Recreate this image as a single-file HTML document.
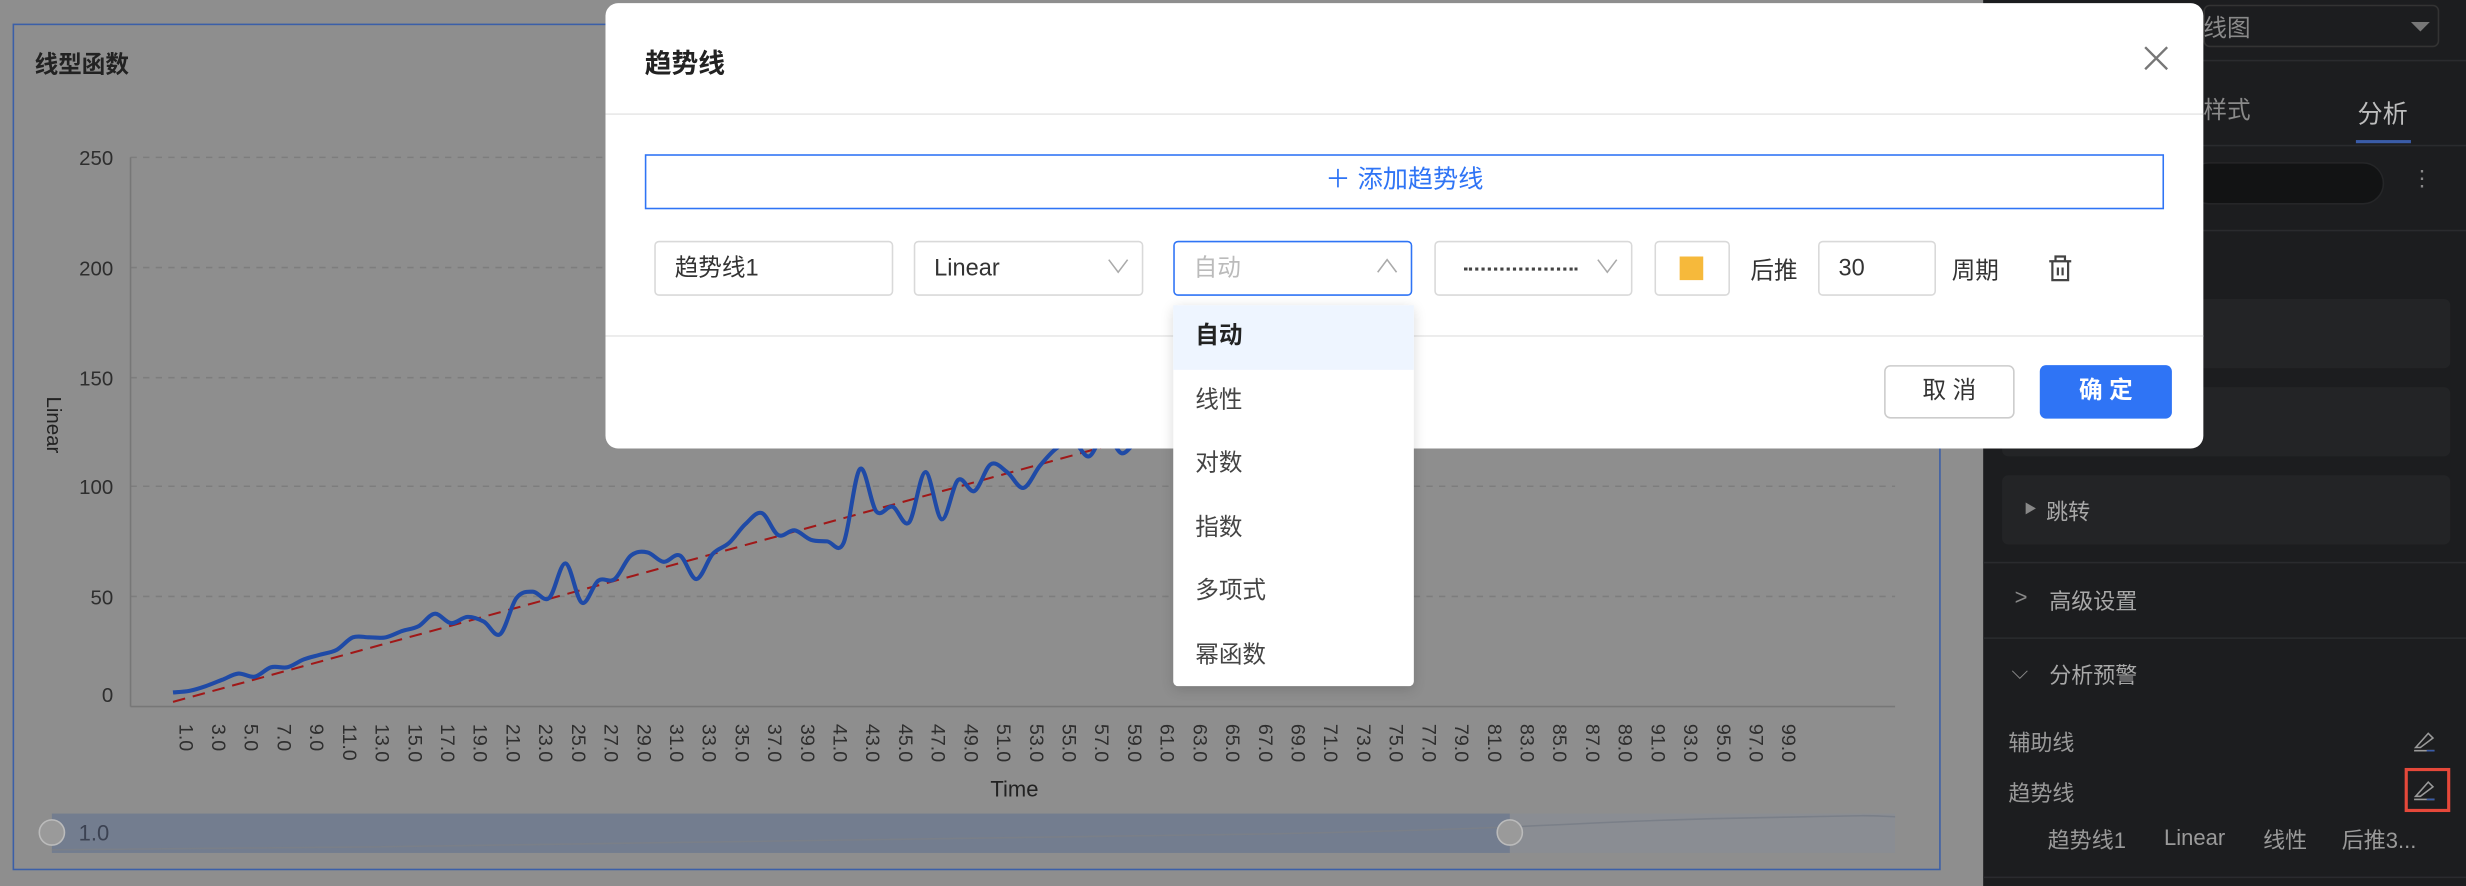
<!DOCTYPE html>
<html><head><meta charset="utf-8"><style>
*{margin:0;padding:0;box-sizing:border-box}
html,body{width:2466px;height:886px;overflow:hidden;background:#8e8e8e}
#s{position:absolute;left:0;top:0;width:1568px;height:563px;transform:scale(1.5727,1.5737);transform-origin:0 0;font-family:"Liberation Sans","Noto Sans CJK SC",sans-serif;}
.a{position:absolute}
.dlg{left:385px;top:2px;width:1016px;height:283px;background:#fff;border-radius:8px}
.inp{position:absolute;top:151px;height:35px;border:1px solid #d9d9d9;border-radius:3px;font-size:15px;color:#333;line-height:33px;padding-left:12px}
.chev{position:absolute;right:8px;top:10px;width:14px;height:10px}
.dd{left:746px;top:194px;width:153px;height:242px;background:#fff;border-radius:3px;box-shadow:0 2px 8px rgba(0,0,0,.15)}
.dd div{height:40.5px;line-height:40px;padding-left:14px;font-size:15px;color:#444}
.pn{left:1261px;top:0;width:307px;height:563px;background:#1c1d1f}
.pt{color:#a8a8a8;font-size:14px;position:absolute}
.blk{position:absolute;left:12px;width:285px;height:44px;background:#232426;border-radius:4px}
.hl{position:absolute;left:0;width:307px;height:1px;background:#2a2b2e}
</style></head><body><div id="s">
<div class="a" style="left:8px;top:15px;width:1226px;height:538px;border:1px solid #3b5fa8"></div>
<div class="a" style="left:22px;top:30px;font-size:15px;font-weight:bold;color:#222">线型函数</div>
<svg class="a" style="left:0;top:0" width="1260" height="563">
<g stroke="#7d7d7d" stroke-dasharray="4 4" stroke-width="1">
<line x1="83" y1="100" x2="1205" y2="100"/><line x1="83" y1="170" x2="1205" y2="170"/><line x1="83" y1="240" x2="1205" y2="240"/><line x1="83" y1="309" x2="1205" y2="309"/><line x1="83" y1="379" x2="1205" y2="379"/></g>
<line x1="83" y1="100" x2="83" y2="449" stroke="#777"/><line x1="83" y1="449" x2="1205" y2="449" stroke="#777"/>
<g font-size="13" fill="#2e2e2e" text-anchor="end" font-family="Liberation Sans">
<text x="72" y="105">250</text><text x="72" y="175">200</text><text x="72" y="245">150</text><text x="72" y="314">100</text><text x="72" y="384">50</text><text x="72" y="446">0</text></g>
<text x="0" y="0" transform="translate(30,270) rotate(90)" font-size="13" fill="#222" text-anchor="middle">Linear</text>
<g id="xl" font-size="12.5" fill="#2e2e2e"></g>
<text x="645" y="506" font-size="14" fill="#222" text-anchor="middle">Time</text>
<line x1="110" y1="446" x2="1129" y2="167" stroke="#a01818" stroke-width="1.3" stroke-dasharray="8 5"/>
<path id="ln" fill="none" stroke="#1f4aa6" stroke-width="2.6" stroke-linejoin="round"/>
<rect x="33" y="517" width="1172" height="25" fill="#8a8d93"/>
<rect x="33" y="517" width="927" height="25" fill="#737d8f"/>
<path d="M33 540 C300 538 600 534 800 530 S1000 522 1100 520 S1180 518 1205 519" stroke="#7a7f88" fill="none"/>
<circle cx="33" cy="529" r="8" fill="#9a9a9a" stroke="#bbb"/><circle cx="960" cy="529" r="8" fill="#9a9a9a" stroke="#bbb"/>
<text x="50" y="534" font-size="14" fill="#3c4252">1.0</text>
</svg>
<div class="a pn">
<div class="a" style="left:140px;top:3px;width:150px;height:27px;border:1px solid #333;border-radius:4px"></div>
<div class="pt" style="left:140px;top:7px;font-size:15px;color:#8a8a8a">线图</div>
<div class="a" style="left:272px;top:14px;border-left:6px solid transparent;border-right:6px solid transparent;border-top:6px solid #777"></div>
<div class="hl" style="top:38px"></div>
<div class="pt" style="left:140px;top:59px;font-size:15px;color:#8a8a8a">样式</div>
<div class="pt" style="left:238px;top:59px;font-size:16px;color:#bdbdbd">分析</div>
<div class="a" style="left:237px;top:89px;width:35px;height:2px;background:#3a5ca8"></div>
<div class="hl" style="top:92px"></div>
<div class="a" style="left:130px;top:103px;width:125px;height:27px;background:#121314;border-radius:14px;border:1px solid #252628"></div>
<div class="pt" style="left:272px;top:105px;color:#888">⋮</div>
<div class="hl" style="top:146px"></div>
<div class="blk" style="top:190px"></div><div class="blk" style="top:246px"></div><div class="blk" style="top:302px"></div>
<div class="pt" style="left:26px;top:318px;font-size:8px;color:#888">▶</div>
<div class="pt" style="left:40px;top:315px">跳转</div>
<div class="hl" style="top:357px"></div>
<div class="pt" style="left:20px;top:371px;color:#888">&gt;</div>
<div class="pt" style="left:42px;top:372px">高级设置</div>
<div class="hl" style="top:405px"></div>
<div class="pt" style="left:18px;top:418px;color:#888">⌵</div>
<div class="pt" style="left:42px;top:419px">分析预警</div>
<div class="pt" style="left:16px;top:462px;color:#9a9a9a">辅助线</div>
<div class="pt" style="left:16px;top:494px;color:#9a9a9a">趋势线</div>
<svg class="a" style="left:273px;top:462px" width="16" height="16"><path d="M2 13 L10 4 L13 7 L5 13 Z M1 15 H14" stroke="#999" fill="none"/><line x1="9" y1="15" x2="14" y2="15" stroke="#3a5ca8"/></svg>
<svg class="a" style="left:273px;top:493px" width="16" height="16"><path d="M2 13 L10 4 L13 7 L5 13 Z M1 15 H14" stroke="#999" fill="none"/><line x1="9" y1="15" x2="14" y2="15" stroke="#3a5ca8"/></svg>
<div class="a" style="left:268px;top:488px;width:29px;height:28px;border:2px solid #e5483a"></div>
<div class="pt" style="left:41px;top:524px;color:#9a9a9a">趋势线1</div>
<div class="pt" style="left:115px;top:524px;color:#9a9a9a">Linear</div>
<div class="pt" style="left:178px;top:524px;color:#9a9a9a">线性</div>
<div class="pt" style="left:228px;top:524px;color:#9a9a9a">后推3...</div>
<div class="hl" style="top:557px"></div>
</div>
<div class="a dlg">
<div class="a" style="left:25px;top:24px;font-size:17px;font-weight:bold;color:#222">趋势线</div>
<svg class="a" style="left:978px;top:27px" width="16" height="16"><path d="M1 1L15 15M15 1L1 15" stroke="#777" stroke-width="1.5"/></svg>
<div class="a" style="left:0;top:70px;width:1016px;height:1px;background:#e8e8e8"></div>
<div class="a" style="left:25px;top:96px;width:966px;height:35px;border:1.5px solid #2f74f5;color:#2f74f5;font-size:16px;line-height:32px;text-align:center">＋ 添加趋势线</div>
<div class="inp" style="left:31px;width:152px">趋势线1</div>
<div class="inp" style="left:196px;width:146px">Linear<svg class="chev" viewBox="0 0 14 10"><path d="M1 1L7 9L13 1" stroke="#aaa" fill="none"/></svg></div>
<div class="inp" style="left:361px;width:152px;border-color:#2f74f5;color:#bbb">自动<svg class="chev" viewBox="0 0 14 10"><path d="M1 9L7 1L13 9" stroke="#aaa" fill="none"/></svg></div>
<div class="inp" style="left:527px;width:126px"><div class="a" style="left:18px;top:16px;width:72px;border-top:2.5px dotted #444"></div><svg class="chev" viewBox="0 0 14 10"><path d="M1 1L7 9L13 1" stroke="#aaa" fill="none"/></svg></div>
<div class="inp" style="left:667px;width:48px"><div class="a" style="left:15px;top:9px;width:15px;height:15px;background:#f6b93b"></div></div>
<div class="a" style="left:728px;top:159px;font-size:15px;color:#333">后推</div>
<div class="inp" style="left:771px;width:75px">30</div>
<div class="a" style="left:856px;top:159px;font-size:15px;color:#333">周期</div>
<svg class="a" style="left:917px;top:160px" width="16" height="18"><path d="M1 4H15M5 4V1H11V4M3 4V16H13V4M6.5 8V13M9.5 8V13" stroke="#444" fill="none" stroke-width="1.4"/></svg>
<div class="a" style="left:0;top:211px;width:1016px;height:1px;background:#e8e8e8"></div>
<div class="a" style="left:813px;top:230px;width:83px;height:34px;border:1px solid #ccc;border-radius:4px;font-size:15px;line-height:32px;text-align:center;color:#333">取 消</div>
<div class="a" style="left:912px;top:230px;width:84px;height:34px;background:#2f74f5;border-radius:4px;font-size:15px;line-height:34px;text-align:center;color:#fff;font-weight:bold">确 定</div>
</div>
<div class="a dd">
<div style="background:#eef5ff;font-weight:bold;color:#222">自动</div><div>线性</div><div>对数</div><div>指数</div><div>多项式</div><div>幂函数</div>
</div>
</div>
<script>
var xl=document.getElementById('xl'),h='';
for(var i=1;i<=99;i+=2){var x=110+(i-1)*10.4+4;h+='<text transform="translate('+x+',460) rotate(90)">'+i.toFixed(1)+'</text>';}
xl.innerHTML=h;
var k={1:440,2:439,3:436,4:432,5:428,6:430,7:424,8:424,9:419,10:416,11:413,12:405,13:405,14:405,15:401,16:398,17:390,18:396,19:392,20:395,21:403,22:380,23:376,24:380,25:358,26:383,27:369,28:368,29:353,30:351,31:357,32:353,33:368,34:352,35:345,36:333,37:326,38:340,39:337,40:343,41:344,42:345,43:298,44:325,45:322,46:332,47:300,48:330,49:305,50:312,51:295,52:300,53:310,54:296,55:285,56:280,57:290,58:275,59:288,60:280,61:282};
var P=[];
for(var i=1;i<=99;i++){var x=110+(i-1)*10.4;var y=k[i]!==undefined?k[i]:(446-2.8*i+10*Math.sin(i*1.7));P.push([x,y]);}
var d='M'+P[0][0]+' '+P[0][1];
for(var j=0;j<P.length-1;j++){var p0=P[j-1]||P[j],p1=P[j],p2=P[j+1],p3=P[j+2]||p2;
d+=' C'+(p1[0]+(p2[0]-p0[0])/6).toFixed(1)+' '+(p1[1]+(p2[1]-p0[1])/6).toFixed(1)+' '+(p2[0]-(p3[0]-p1[0])/6).toFixed(1)+' '+(p2[1]-(p3[1]-p1[1])/6).toFixed(1)+' '+p2[0].toFixed(1)+' '+p2[1].toFixed(1);}
document.getElementById('ln').setAttribute('d',d);
</script>
</body></html>
